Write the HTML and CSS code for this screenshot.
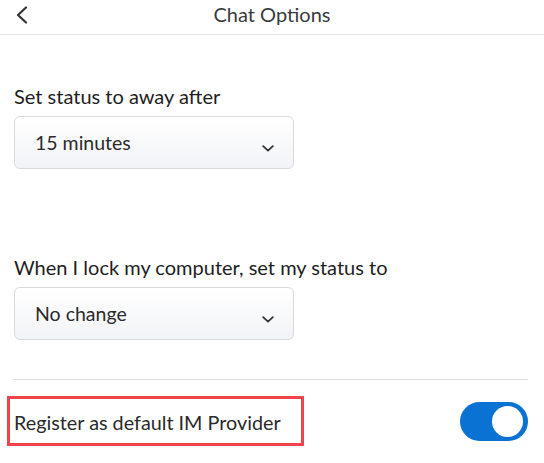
FILE: index.html
```html
<!DOCTYPE html>
<html>
<head>
<meta charset="utf-8">
<link rel="stylesheet" href="styles.css">
</head>
<body>
<div class="app">
  <header class="header">
    <button class="back" aria-label="Back">
      <svg width="13" height="18" viewBox="0 0 13 18"><path d="M11 1.5 L3 9 L11 16.5" fill="none" stroke="#333" stroke-width="2.2" stroke-linecap="round" stroke-linejoin="round"/></svg>
    </button>
    <h1 class="title">Chat Options</h1>
  </header>
  <main class="content">
    <section class="field first">
      <label class="label">Set status to away after</label>
      <div class="select">
        <span class="value">15 minutes</span>
        <svg class="caret" width="12" height="7" viewBox="0 0 12 7"><path d="M1.2 1.2 L6 5.6 L10.8 1.2" fill="none" stroke="#333" stroke-width="1.8" stroke-linecap="round" stroke-linejoin="round"/></svg>
      </div>
    </section>
    <section class="field second">
      <label class="label">When I lock my computer, set my status to</label>
      <div class="select">
        <span class="value">No change</span>
        <svg class="caret" width="12" height="7" viewBox="0 0 12 7"><path d="M1.2 1.2 L6 5.6 L10.8 1.2" fill="none" stroke="#333" stroke-width="1.8" stroke-linecap="round" stroke-linejoin="round"/></svg>
      </div>
    </section>
    <hr class="divider">
    <div class="row">
      <div class="highlight"><span class="row-label">Register as default IM Provider</span></div>
      <div class="toggle on"><span class="knob"></span></div>
    </div>
  </main>
</div>
</body>
</html>
```
FILE: styles.css
```css
* { box-sizing: border-box; }
html, body { margin: 0; padding: 0; background: #fff; }
body {
  font-family: Lato, "Open Sans", sans-serif;
  color: #222;
  width: 544px;
  height: 463px;
  overflow: hidden;
}
.header {
  position: relative;
  height: 35px;
  border-bottom: 1px solid #e4e4e4;
  display: flex;
  align-items: center;
  justify-content: center;
}
.back {
  position: absolute;
  left: 15px;
  top: 6px;
  border: 0;
  background: none;
  padding: 0;
  width: 13px;
  height: 18px;
  display: flex;
}
.title {
  margin: 0;
  font-size: 20px;
  font-weight: 400;
  color: #3a3a3a;
  line-height: 24px;
  padding-bottom: 6px;
}
.content {
  padding: 0 16px 0 14px;
}
.field { display: flex; flex-direction: column; align-items: flex-start; }
.field.first { margin-top: 49px; }
.field.second { margin-top: 86px; }
.label {
  font-size: 20px;
  line-height: 24px;
  color: #1e1e1e;
  margin-bottom: 8px;
}
.select {
  width: 280px;
  height: 53px;
  border: 1px solid #d9dadd;
  border-radius: 6px;
  background: linear-gradient(#ffffff, #f2f3f6);
  display: flex;
  align-items: center;
  justify-content: space-between;
  padding: 0 19px 0 20px;
}
.value {
  font-size: 19.5px;
  line-height: 24px;
  color: #2b2b2b;
}
.caret { margin-top: 12px; }
.divider {
  margin: 39px 0 0 -1px;
  border: 0;
  border-top: 1px solid #dcdcdc;
  height: 0;
}
.row {
  display: flex;
  align-items: center;
  justify-content: space-between;
  margin-top: 16px;
}
.highlight {
  margin-left: -7px;
  width: 297px;
  height: 50px;
  border: 3px solid #f0434a;
  display: flex;
  align-items: center;
  padding-left: 4px;
}
.row-label {
  font-size: 19.8px;
  line-height: 24px;
  color: #2a2a2a;
  padding-top: 2px;
}
.toggle {
  width: 68px;
  height: 39px;
  border-radius: 20px;
  background: #0a72d2;
  display: flex;
  align-items: center;
  justify-content: flex-end;
  padding-right: 5px;
}
.knob {
  width: 31px;
  height: 31px;
  border-radius: 50%;
  background: #fff;
}
```
